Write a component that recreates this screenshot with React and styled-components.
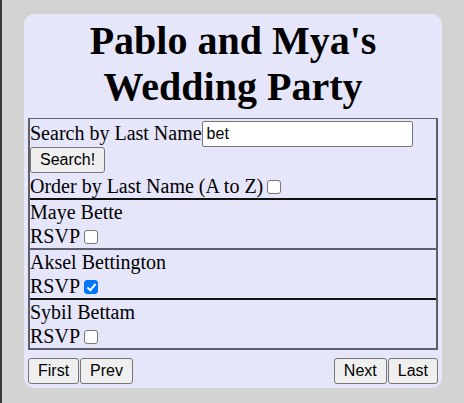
import styled, { createGlobalStyle } from 'styled-components';

const GlobalStyle = createGlobalStyle`
  html, body {
    margin: 0;
    padding: 0;
    background: #d3d3d3;
  }
  body {
    font-family: "Liberation Serif", "Times New Roman", serif;
  }
`;

const Page = styled.div`
  min-height: 100vh;
  border-left: 2px solid #3a3a3a;
  padding-top: 14px;
  box-sizing: border-box;
`;

const Card = styled.div`
  width: 418px;
  margin: 0 auto;
  padding: 4px;
  box-sizing: border-box;
  background: #e6e6fa;
  border-radius: 10px;
`;

const Title = styled.h1`
  margin: 0 0 8px;
  font-size: 40px;
  line-height: 46px;
  font-weight: bold;
  text-align: center;
  color: #000;
`;

const List = styled.div`
  border-top: 1px solid #5f5f6a;
  border-left: 2px solid #5f5f6a;
  border-right: 2px solid #5f5f6a;
`;

const Row = styled.div`
  font-size: 20px;
  color: #000;
  border-bottom: 2px solid ${({ $dark }) => ($dark ? '#111' : '#5f5f6a')};
`;

const Line = styled.div`
  line-height: ${({ $h }) => $h || 24}px;
  height: ${({ $h }) => $h || 24}px;
  overflow: hidden;
`;

const SearchInput = styled.input`
  width: 211px;
  height: 26px;
  box-sizing: border-box;
  padding: 1px 4px;
  margin: 2px 0 0;
  border: 1px solid #767676;
  border-radius: 2px;
  background: #fff;
  font-family: "Liberation Sans", Arial, sans-serif;
  font-size: 16px;
  color: #000;
  vertical-align: top;
`;

const Button = styled.button`
  height: 26px;
  box-sizing: border-box;
  font-family: "Liberation Sans", Arial, sans-serif;
  font-size: 16px;
  color: #000;
  background: #efefef;
  border: 1px solid #767676;
  border-radius: 3px;
  padding: 0 9px;
  margin: 0;
  line-height: 18px;
  vertical-align: top;
  cursor: pointer;
`;

const Check = styled.input.attrs({ type: 'checkbox' })`
  appearance: none;
  position: relative;
  box-sizing: border-box;
  width: 14px;
  height: 14px;
  margin: 0 3px 0 4px;
  border: 1px solid #767676;
  border-radius: 3px;
  background: #fff;
  vertical-align: -1px;

  &:checked {
    background: #0075ff;
    border-color: #0075ff;
  }

  &:checked::after {
    content: '';
    position: absolute;
    left: 4px;
    top: 1px;
    width: 3px;
    height: 7px;
    border: solid #fff;
    border-width: 0 2px 2px 0;
    transform: rotate(40deg);
  }
`;

const Pager = styled.div`
  display: flex;
  justify-content: space-between;
  margin-top: 8px;
`;

const PagerGroup = styled.div`
  display: flex;
  gap: 1px;
`;

const guests = [
  { id: 1, name: 'Maye Bette', rsvp: false },
  { id: 2, name: 'Aksel Bettington', rsvp: true },
  { id: 3, name: 'Sybil Bettam', rsvp: false },
];

const App = () => {
  return (
    <Page>
      <GlobalStyle />
      <Card>
        <Title>Pablo and Mya's Wedding Party</Title>
        <List>
          <Row $dark>
            <Line $h={28}>
              Search by Last Name
              <SearchInput defaultValue="bet" />
            </Line>
            <Line $h={27}>
              <Button>Search!</Button>
            </Line>
            <Line>
              Order by Last Name (A to Z)
              <Check />
            </Line>
          </Row>
          {guests.map((guest, i) => (
            <Row key={guest.id} $dark={i % 2 === 1}>
              <Line>{guest.name}</Line>
              <Line $h={24}>
                RSVP
                <Check defaultChecked={guest.rsvp} />
              </Line>
            </Row>
          ))}
        </List>
        <Pager>
          <PagerGroup>
            <Button>First</Button>
            <Button>Prev</Button>
          </PagerGroup>
          <PagerGroup>
            <Button>Next</Button>
            <Button>Last</Button>
          </PagerGroup>
        </Pager>
      </Card>
    </Page>
  );
};

export default App;
